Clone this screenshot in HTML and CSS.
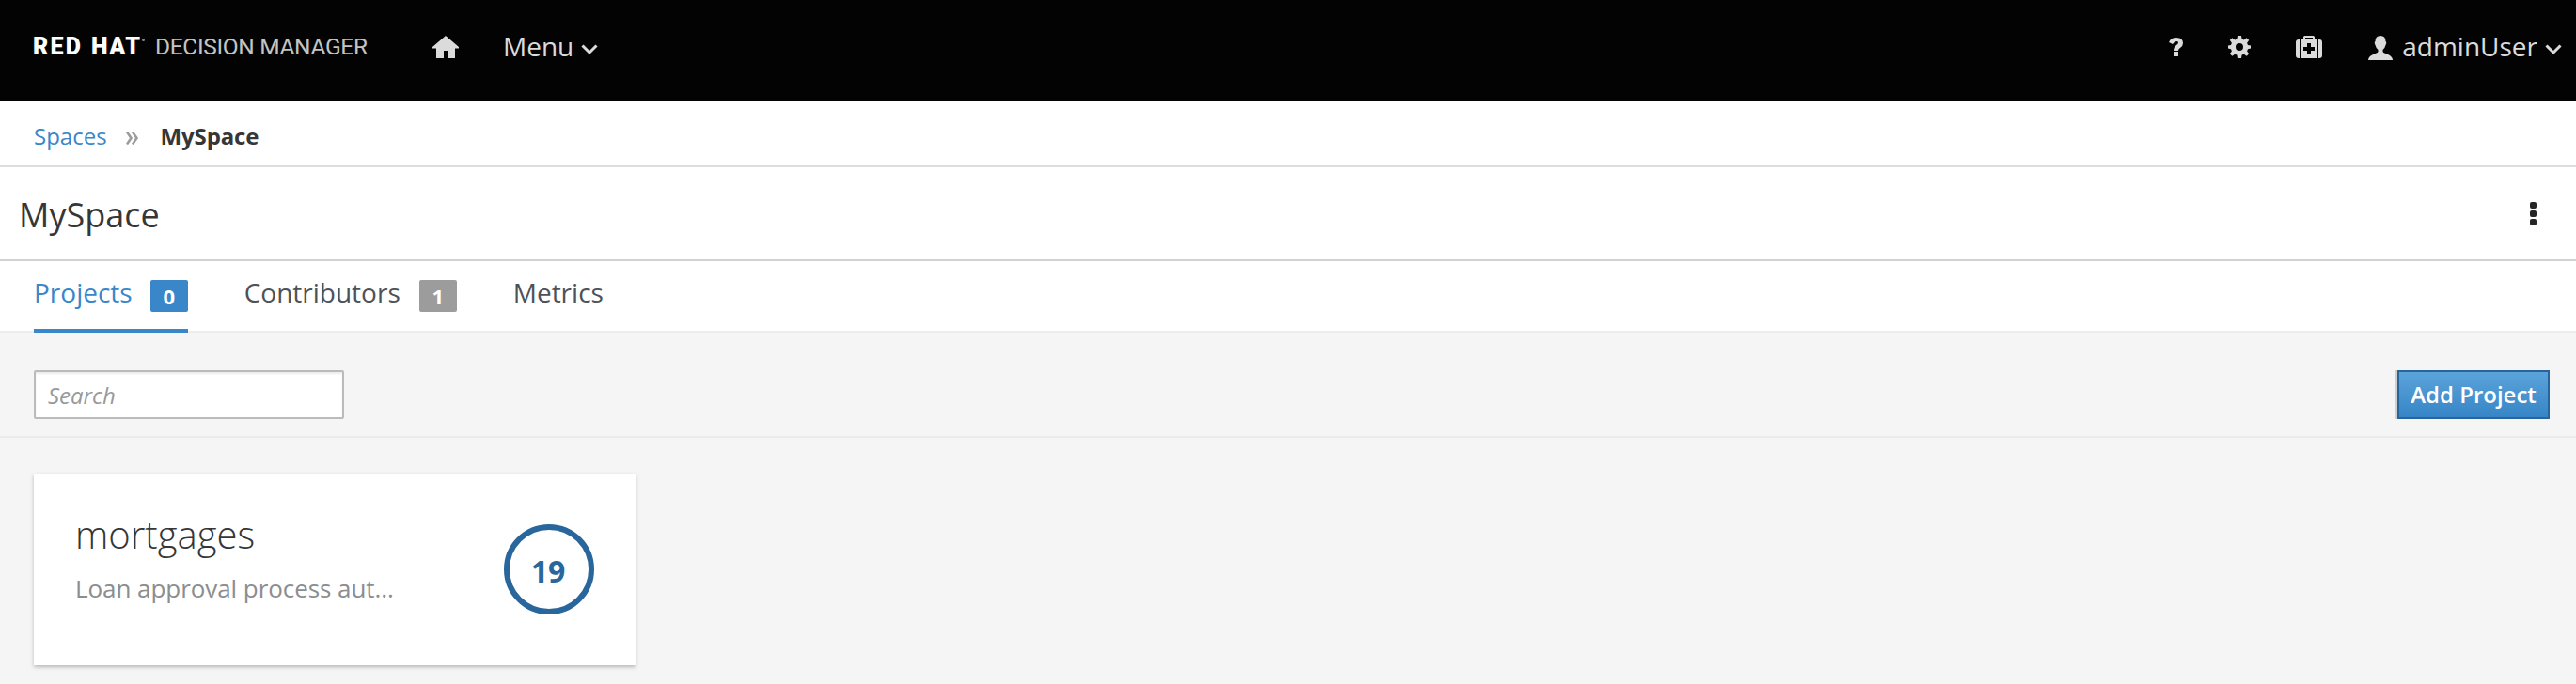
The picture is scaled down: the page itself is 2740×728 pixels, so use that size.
FILE: index.html
```html
<!DOCTYPE html>
<html lang="en">
<head>
<meta charset="utf-8">
<title>Red Hat Decision Manager</title>
<link rel="stylesheet" href="styles.css">
</head>
<body>
<header class="masthead">
  <svg class="brand" width="364" height="40" viewBox="0 0 364 40" role="img">
    <text class="brand-bold" x="-1" y="28" textLength="51" lengthAdjust="spacing">RED</text>
    <text class="brand-bold" x="61" y="28" textLength="52" lengthAdjust="spacing">HAT</text>
    <circle cx="116.500" cy="12.500" r="1.500" fill="#888"/>
    <text class="brand-light" x="129" y="28" textLength="226" lengthAdjust="spacing">DECISION MANAGER</text>
  </svg>
  <svg class="home" width="28" height="24" viewBox="0 0 28 24"><path d="M14 0 28 12v1.500h-4V24h-8v-8h-4v8H4V13.500H0V12z"/></svg>
  <nav class="menu"><span>Menu</span><svg class="caret" width="18" height="12" viewBox="0 0 18 12"><path d="M1.500 1.500 9 9l7.500-7.500"/></svg></nav>
  <div class="tools">
    <svg class="help" width="15" height="20" viewBox="0 0 15 20"><path d="M0 5Q2 0 8 0q7 0 7 6 0 3-3 5-2 1-2 3H5q0-4 3-6 2-1 2-3 0-1-2-1Q6 4 4 7zM5 15h5v5H5z"/></svg>
    <svg class="gear" width="24" height="24" viewBox="0 0 24 24"><path fill-rule="evenodd" d="M10 0h4l.6 3.500 2.200.9L19.700 2.300l2.500 2.500-2.100 2.900.9 2.200 3 .6v3l-3 .8-.9 2.100 2.100 2.900-2.500 2.500-2.900-2.100-2.200.9L14 24h-4l-.6-3.400-2.200-.9-2.900 2.100-2.500-2.500 2.100-2.900-.9-2.100-3-.8v-3l3-.6.9-2.200-2.100-2.900 2.500-2.500 2.900 2.100 2.200-.9zM12 8a4 4 0 1 0 0 8 4 4 0 0 0 0-8z"/></svg>
    <svg class="kit" width="28" height="24" viewBox="0 0 28 24"><path fill-rule="evenodd" d="M4 4v20H3q-3 0-3-3V7q0-3 3-3zM24 4h1q3 0 3 3v14q0 3-3 3h-1zM5.500 4H8V1.500Q8 0 9.500 0h9Q20 0 20 1.500V4h2.500v20h-17zM10 2v2h8V2zM12 8v4H8v4h4v4h4v-4h4v-4h-4V8z"/></svg>
    <svg class="person" width="26" height="26" viewBox="0 0 26 26"><path d="M7.500 6Q7.500 0 13 0t5.500 6q1.500 1 0 4-1 4-3 5v2q0 1 3 2 7.500 2.500 7.500 7H0q0-4.500 7.500-7 3-1 3-2v-2q-2-1-3-5-1.500-3 0-4z"/></svg>
    <span class="user">adminUser</span><svg class="caret" width="18" height="12" viewBox="0 0 18 12"><path d="M1.500 1.500 9 9l7.500-7.500"/></svg>
  </div>
</header>
<nav class="crumbs"><a class="crumb-link">Spaces</a><svg class="sep" width="14" height="14" viewBox="0 0 14 14"><path d="M1 .5 5.500 7 1 13.500M7 .5 11.500 7 7 13.500"/></svg><strong>MySpace</strong></nav>
<section class="titlebar"><h1 class="title">MySpace</h1><div class="kebab"><i class="dot"></i><i class="dot"></i><i class="dot"></i></div></section>
<nav class="tabs">
  <div class="tab active"><span class="tab-name">Projects</span><span class="badge">0</span></div>
  <div class="tab"><span class="tab-name">Contributors</span><span class="badge">1</span></div>
  <div class="tab"><span class="tab-name">Metrics</span></div>
</nav>
<section class="toolbar"><input class="search" type="text" placeholder="Search"><button class="add">Add Project</button></section>
<main class="content">
  <article class="card">
    <div class="info"><h2 class="name">mortgages</h2><p class="desc">Loan approval process aut...</p></div>
    <div class="count">19</div>
  </article>
</main>
</body>
</html>
```
FILE: styles.css
```css
* { box-sizing: border-box; }
body { margin: 0; height: 728px; overflow: hidden; background: #f5f5f5; color: #363636; font-family: "Open Sans", sans-serif; }
svg { display: block; flex: none; }
.masthead { display: flex; align-items: flex-start; height: 108px; background: #030303; color: #dbdbdb; fill: #dbdbdb; font-size: 28px; line-height: 40px; }
.brand { margin: 30px 0 0 36px; overflow: visible; font-family: "Roboto", sans-serif; font-size: 25px; line-height: 30px; }
.brand-bold { font-weight: 900; fill: #fff; }
.brand-light { font-weight: 400; font-size: 24.5px; fill: #c4c4c4; }
.home { margin: 38px 0 0 60px; }
.menu { display: flex; margin: 29px 0 0 47px; }
.caret { fill: none; stroke: #dbdbdb; stroke-width: 3; margin: 18px 0 0 8px; }
.tools { display: flex; margin-left: auto; padding-right: 15px; }
.help { margin-top: 40px; }
.gear { margin: 38px 0 0 48px; }
.kit { margin: 38px 0 0 48px; }
.person { margin: 38px 0 0 49px; }
.user { margin: 29px 0 0 10px; }
.tools .caret { margin-top: 47px; margin-left: 8px; }
.crumbs { display: flex; align-items: center; height: 70px; padding: 4px 36px 0; background: #fff; border-bottom: 2px solid #ddd; font-size: 24px; }
.crumb-link { color: #3987c9; }
.sep { margin: 6px 23px 0 20px; fill: none; stroke: #9c9c9c; stroke-width: 2.600; }
.crumbs strong { letter-spacing: -.15px; }
.titlebar { display: flex; justify-content: space-between; align-items: flex-start; height: 100px; background: #fff; border-bottom: 2px solid #d1d1d1; }
.title { margin: 26px 0 0 20px; font-size: 36px; line-height: 50px; font-weight: 400; }
.kebab { display: flex; flex-direction: column; gap: 2px; margin: 37px 42px 0 0; }
.dot { width: 7px; height: 7px; border-radius: 2px; background: #252525; }
.tabs { display: flex; height: 76px; padding-left: 36px; gap: 60px; background: #fff; border-bottom: 2px solid #ededed; color: #4d5258; }
.tab { display: flex; height: 76px; }
.tab-name { margin-top: 13px; font-size: 28px; line-height: 40px; }
.active { color: #3987c9; border-bottom: 4px solid #3987c9; }
.badge { width: 40px; height: 34px; margin: 20px 0 0 20px; background: #9c9c9c; border-radius: 2px; color: #fff; font-size: 22px; line-height: 34px; font-weight: 700; text-align: center; }
.active .badge { margin-left: 19px; background: #3987c9; }
.toolbar { display: flex; justify-content: space-between; align-items: flex-start; height: 112px; padding: 40px 28px 0 36px; border-bottom: 2px solid #ebebeb; }
.search { width: 330px; height: 52px; padding: 2px 13px 2px; border: 2px solid #bbb; border-radius: 2px; background: #fff; box-shadow: inset 0 2px 2px rgba(3,3,3,.075); font: 24px "Open Sans", sans-serif; }
.search::placeholder { color: #999; font-style: italic; opacity: 1; }
.add { width: 162px; height: 52px; padding: 0 0 2px; border: 2px solid #28659c; background: linear-gradient(#5ba4da, #3785c7); box-shadow: -2px 0 0 #d0d0d0; color: #fff; font: 600 24px "Open Sans", sans-serif; }
.content { padding: 38px 36px; }
.card { display: flex; justify-content: space-between; width: 640px; height: 204px; padding: 0 44px; background: #fff; box-shadow: 0 2px 4px rgba(3,3,3,.25); }
.name { margin: 37px 0 0; font-size: 40px; line-height: 56px; font-weight: 300; }
.desc { margin: 11px 0 0; color: #8b8d8f; font-size: 26px; line-height: 36px; letter-spacing: -.06px; }
.count { display: flex; align-items: center; justify-content: center; width: 96px; height: 96px; margin-top: 54px; padding: 2px 2px 0 0; border: 6px solid #28669b; border-radius: 50%; color: #28669b; font-size: 32px; font-weight: 700; }
```
